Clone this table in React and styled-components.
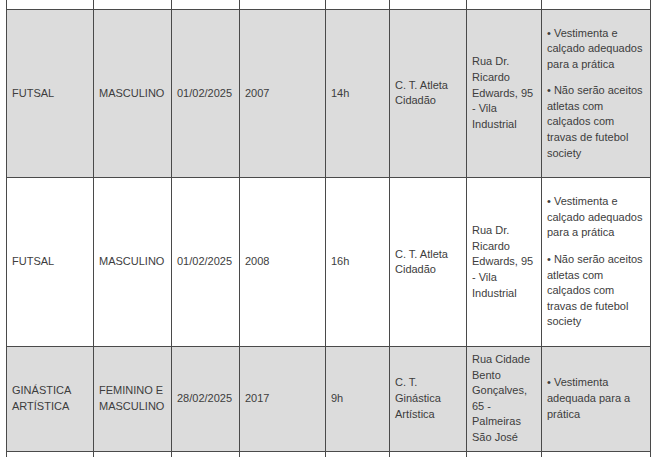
import React from 'react';
import styled, { createGlobalStyle } from 'styled-components';

const GlobalStyle = createGlobalStyle`
  body {
    margin: 0;
    background: #ffffff;
    font-family: "Liberation Sans", Arial, sans-serif;
  }
`;

const Page = styled.div`
  padding: 0 6px;
  height: 457px;
  overflow: hidden;
`;

const Table = styled.table`
  border-collapse: collapse;
  table-layout: fixed;
  width: 645px;
  font-size: 11px;
  line-height: 15.6px;
  color: #3d3d3d;
`;

const Row = styled.tr`
  background: ${props => (props.shaded ? '#dcdcdc' : '#ffffff')};
  height: ${props => props.h || 'auto'};
`;

const Cell = styled.td`
  border: 1px solid #4a4a4a;
  padding: 5px;
  vertical-align: middle;
  text-align: left;
  ${props => props.edge === 'top' && 'border-top: none;'}
  ${props => props.edge === 'bottom' && 'border-bottom: none;'}
`;

const Note = styled.p`
  margin: 11px 0;
`;

const widths = [87, 78, 68, 86, 64, 77, 75, 109];

const futsalNotes = [
  '• Vestimenta e calçado adequados para a prática',
  '• Não serão aceitos atletas com calçados com travas de futebol society',
];

const rows = [
  {
    shaded: true,
    cells: ['FUTSAL', 'MASCULINO', '01/02/2025', '2007', '14h', 'C. T. Atleta Cidadão', 'Rua Dr. Ricardo Edwards, 95 - Vila Industrial'],
    notes: futsalNotes,
  },
  {
    shaded: false,
    cells: ['FUTSAL', 'MASCULINO', '01/02/2025', '2008', '16h', 'C. T. Atleta Cidadão', 'Rua Dr. Ricardo Edwards, 95 - Vila Industrial'],
    notes: futsalNotes,
  },
  {
    shaded: true,
    cells: ['GINÁSTICA ARTÍSTICA', 'FEMININO E MASCULINO', '28/02/2025', '2017', '9h', 'C. T. Ginástica Artística', 'Rua Cidade Bento Gonçalves, 65 - Palmeiras São José'],
    notes: ['• Vestimenta adequada para a prática'],
  },
];

const EmptyRow = ({ edge, h }) => (
  <Row h={h}>
    {widths.map((w, i) => (
      <Cell key={i} edge={edge} style={{ padding: 0 }} />
    ))}
  </Row>
);

export default function App() {
  return (
    <>
      <GlobalStyle />
      <Page>
        <Table>
          <colgroup>
            {widths.map((w, i) => (
              <col key={i} style={{ width: w }} />
            ))}
          </colgroup>
          <tbody>
            <EmptyRow edge="top" h="9px" />
            {rows.map((row, r) => (
              <Row key={r} shaded={row.shaded}>
                {row.cells.map((text, c) => (
                  <Cell key={c}>{text}</Cell>
                ))}
                <Cell>
                  {row.notes.map((n, k) => (
                    <Note key={k}>{n}</Note>
                  ))}
                </Cell>
              </Row>
            ))}
            <EmptyRow edge="bottom" h="20px" />
          </tbody>
        </Table>
      </Page>
    </>
  );
}
